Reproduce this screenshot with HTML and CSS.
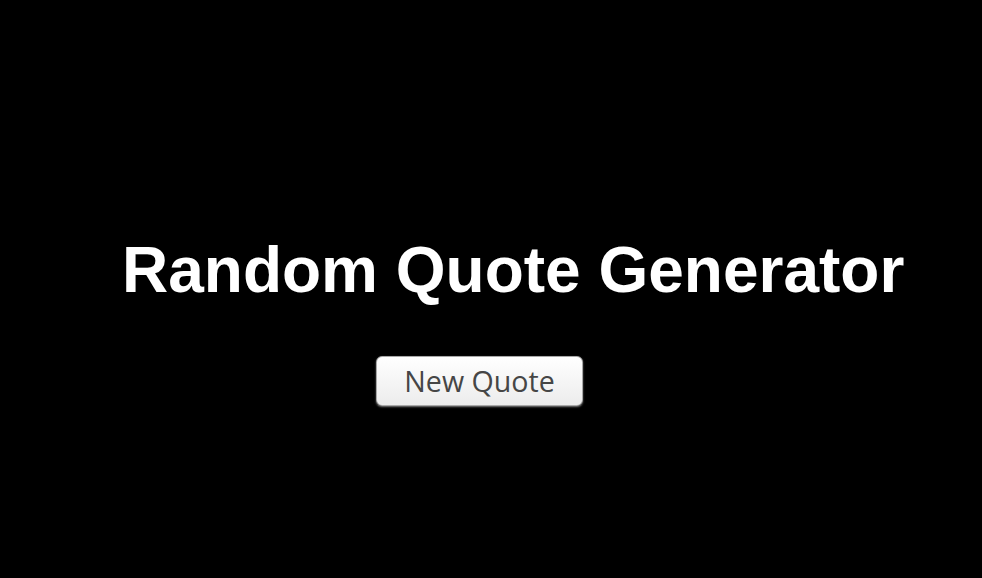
FILE: index.html
```html
<!DOCTYPE html>
<html lang="en">
<head>
<meta charset="utf-8">
<title>Random Quote Generator</title>
<link rel="stylesheet" href="styles.css">
</head>
<body>
<main class="page">
  <h1 class="title">Random Quote Generator</h1>
  <div class="actions">
    <button class="quote-btn" type="button">New Quote</button>
  </div>
</main>
</body>
</html>
```
FILE: styles.css
```css
html, body {
  margin: 0;
  padding: 0;
  background: #000;
  height: 100%;
}
.page {
  padding-top: 234px;
  display: flex;
  flex-direction: column;
}
.title {
  margin: 0;
  padding-left: 122px;
  font-family: "Liberation Sans", Arial, sans-serif;
  font-weight: bold;
  font-size: 64px;
  line-height: 72px;
  color: #fff;
}
.actions {
  margin-top: 50px;
  padding-left: 376px;
  display: flex;
}
.quote-btn {
  width: 207px;
  height: 50px;
  padding: 0;
  border: 1px solid #a8a8a8;
  border-radius: 6px;
  background: linear-gradient(#ffffff, #ececec);
  box-shadow: 0 1px 2px rgba(200, 200, 200, 0.6);
  font-family: "Open Sans", sans-serif;
  font-size: 28.6px;
  line-height: 38px;
  color: #464646;
  cursor: pointer;
}
```
